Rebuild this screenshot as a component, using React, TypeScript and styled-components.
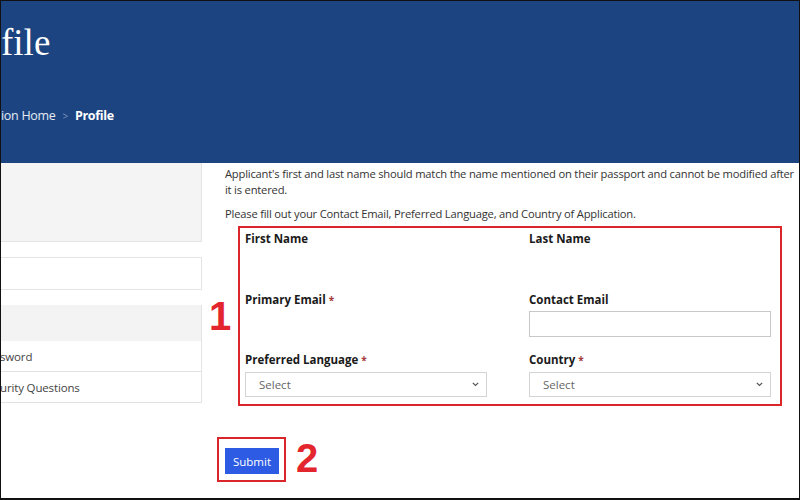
import React from 'react';
import styled, { createGlobalStyle } from 'styled-components';

const GlobalStyle = createGlobalStyle`
  html, body {
    margin: 0;
    padding: 0;
    background: #ffffff;
  }
  body {
    font-family: "Open Sans", "Noto Sans", sans-serif;
  }
`;

const Frame = styled.div`
  width: 800px;
  height: 500px;
  box-sizing: border-box;
  border: 1px solid #111;
  border-bottom-width: 2px;
  overflow: hidden;
  position: relative;
  background: #fff;
`;

const Banner = styled.header`
  height: 162px;
  background: #1b4480;
  display: flex;
  flex-direction: column;
`;

const Title = styled.h1`
  margin: 18px 0 0 0;
  font-family: "Liberation Serif", "DejaVu Serif", serif;
  font-weight: 400;
  font-size: 37px;
  line-height: 48px;
  color: #ffffff;
`;

const Crumbs = styled.nav`
  margin-top: 40px;
  display: flex;
  align-items: center;
  gap: 5px;
  font-size: 12.5px;
  line-height: 18px;
  letter-spacing: -0.3px;
  color: #e6ebf3;
`;

const Sep = styled.span`
  color: #7f90b8;
  font-size: 10px;
  margin: 0 2px;
`;

const Current = styled.span`
  font-weight: 700;
  color: #ffffff;
`;

const Body = styled.div`
  display: flex;
  gap: 23px;
`;

const Sidebar = styled.aside`
  width: 201px;
  flex-shrink: 0;
  display: flex;
  flex-direction: column;
`;

const Panel = styled.div<{ $grey?: boolean; $h: number; $mt?: number }>`
  height: ${(p) => p.$h}px;
  margin-top: ${(p) => p.$mt ?? 0}px;
  box-sizing: border-box;
  background: ${(p) => (p.$grey ? '#f4f4f4' : '#ffffff')};
  border: 1px solid #e4e4e4;
  border-left: none;
  border-top: ${(p) => (p.$mt ? '1px solid #e4e4e4' : 'none')};
`;

const Menu = styled.div`
  margin-top: 15px;
  display: flex;
  flex-direction: column;
  border-right: 1px solid #e4e4e4;
`;

const MenuHead = styled.div`
  height: 36px;
  background: #f3f3f3;
`;

const MenuItem = styled.div`
  height: 31px;
  box-sizing: border-box;
  border-bottom: 1px solid #e2e2e2;
  display: flex;
  align-items: center;
  font-size: 11.5px;
  letter-spacing: -0.15px;
  color: #444;
  margin-left: -1px;
`;

const Main = styled.main`
  width: 572px;
  padding-top: 3px;
`;

const Note = styled.p`
  margin: 0 0 8px;
  font-size: 11.2px;
  line-height: 16px;
  letter-spacing: -0.2px;
  color: #333;
`;

const AnnotBox = styled.div`
  position: relative;
  margin: -4px 0 0 13px;
  width: 544px;
  height: 180px;
  box-sizing: border-box;
  border: 2px solid #d9262b;
  padding: 3px 9px 0 5px;
  display: grid;
  grid-template-columns: 242px 242px;
  grid-template-rows: 45px 45px 45px;
  column-gap: 42px;
  row-gap: 15.5px;
`;

const Marker = styled.span<{ $left: number; $top: number; $size: number }>`
  position: absolute;
  left: ${(p) => p.$left}px;
  top: ${(p) => p.$top}px;
  font-family: "Liberation Sans", Arial, sans-serif;
  font-weight: 700;
  font-size: ${(p) => p.$size}px;
  line-height: ${(p) => p.$size}px;
  color: #e3262d;
`;

const Field = styled.div`
  display: flex;
  flex-direction: column;
  gap: 4px;
`;

const Label = styled.label`
  font-size: 11.5px;
  line-height: 15px;
  font-weight: 700;
  color: #1a1a1a;
`;

const Star = styled.span`
  color: #a33a3a;
  font-size: 10px;
  margin-left: 3px;
`;

const Input = styled.input`
  height: 26px;
  width: 100%;
  box-sizing: border-box;
  border: 1px solid #c8c8c8;
  background: #fff;
  margin: 0;
`;

const SelectBox = styled.div`
  height: 26px;
  box-sizing: border-box;
  border: 1px solid #d4d4d4;
  display: flex;
  align-items: center;
  justify-content: space-between;
  padding: 0 7px 0 13px;
  font-size: 11.5px;
  color: #666;
`;

const SubmitWrap = styled.div`
  position: relative;
  margin: 31px 0 0 -8px;
  width: 69px;
  height: 45px;
  box-sizing: border-box;
  border: 2px solid #d9262b;
  padding: 9px 0 0 6px;
`;

const SubmitButton = styled.button`
  width: 54px;
  height: 26px;
  border: none;
  background: #2d5be3;
  color: #fff;
  font-family: "Open Sans", "Noto Sans", sans-serif;
  font-size: 11.5px;
  padding: 0;
`;

const Chevron = () => (
  <svg width="7" height="5" viewBox="0 0 7 5">
    <path d="M0.8 0.8l2.7 2.7 2.7-2.7" fill="none" stroke="#555" strokeWidth="1.2" />
  </svg>
);

const App: React.FC = () => {
  return (
    <Frame>
      <GlobalStyle />
      <Banner>
        <Title>file</Title>
        <Crumbs>
          <span>ion Home</span>
          <Sep>&gt;</Sep>
          <Current>Profile</Current>
        </Crumbs>
      </Banner>
      <Body>
        <Sidebar>
          <Panel $grey $h={79} />
          <Panel $h={33} $mt={15} />
          <Menu>
            <MenuHead />
            <MenuItem>sword</MenuItem>
            <MenuItem>urity Questions</MenuItem>
          </Menu>
        </Sidebar>
        <Main>
          <Note>
            Applicant's first and last name should match the name mentioned on their passport and cannot be modified after it is entered.
          </Note>
          <Note>Please fill out your Contact Email, Preferred Language, and Country of Application.</Note>
          <AnnotBox>
            <Marker $left={-31} $top={68} $size={40}>1</Marker>
            <Field>
              <Label>First Name</Label>
            </Field>
            <Field>
              <Label>Last Name</Label>
            </Field>
            <Field>
              <Label>
                Primary Email<Star>*</Star>
              </Label>
            </Field>
            <Field>
              <Label>Contact Email</Label>
              <Input type="text" />
            </Field>
            <Field>
              <Label>
                Preferred Language<Star>*</Star>
              </Label>
              <SelectBox>
                Select
                <Chevron />
              </SelectBox>
            </Field>
            <Field>
              <Label>
                Country<Star>*</Star>
              </Label>
              <SelectBox>
                Select
                <Chevron />
              </SelectBox>
            </Field>
          </AnnotBox>
          <SubmitWrap>
            <SubmitButton>Submit</SubmitButton>
            <Marker $left={77} $top={-1} $size={40}>2</Marker>
          </SubmitWrap>
        </Main>
      </Body>
    </Frame>
  );
};

export default App;
